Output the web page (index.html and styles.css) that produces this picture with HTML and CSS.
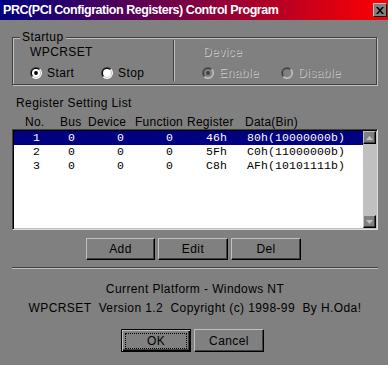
FILE: index.html
```html
<!DOCTYPE html>
<html>
<head>
<meta charset="utf-8">
<title>PRC Control Program</title>
<link rel="stylesheet" href="styles.css">
</head>
<body>
<div class="window">
  <div class="titlebar">
    <span class="title">PRC(PCI Configration Registers) Control Program</span>
    <span class="close"><svg width="8" height="7" viewBox="0 0 8 7"><path d="M0 0h2l2 2.3 2-2.3h2l-3 3.5 3 3.5h-2l-2-2.3-2 2.3h-2l3-3.5z" fill="#000"/></svg></span>
  </div>
  <div class="main">
    <div class="group">
      <div class="legend">Startup</div>
      <div class="cols">
        <div class="col col-left">
          <div class="label">WPCRSET</div>
          <div class="radios">
            <div class="opt opt-start">
              <svg class="radio" width="12" height="12" viewBox="0 0 12 12">
                <path d="M1.757 10.243A6 6 0 0 1 10.243 1.757Z" fill="#404040"/>
                <path d="M10.243 1.757A6 6 0 0 1 1.757 10.243Z" fill="#ffffff"/>
                <path d="M2.464 9.536A5 5 0 0 1 9.536 2.464Z" fill="#000000"/>
                <path d="M9.536 2.464A5 5 0 0 1 2.464 9.536Z" fill="#c0c0c0"/>
                <circle cx="6" cy="6" r="4" fill="#ffffff"/>
                <circle cx="6" cy="6" r="1.9" fill="#000000"/>
              </svg>
              <span>Start</span>
            </div>
            <div class="opt">
              <svg class="radio" width="12" height="12" viewBox="0 0 12 12">
                <path d="M1.757 10.243A6 6 0 0 1 10.243 1.757Z" fill="#404040"/>
                <path d="M10.243 1.757A6 6 0 0 1 1.757 10.243Z" fill="#ffffff"/>
                <path d="M2.464 9.536A5 5 0 0 1 9.536 2.464Z" fill="#000000"/>
                <path d="M9.536 2.464A5 5 0 0 1 2.464 9.536Z" fill="#c0c0c0"/>
                <circle cx="6" cy="6" r="4" fill="#ffffff"/>
              </svg>
              <span>Stop</span>
            </div>
          </div>
        </div>
        <div class="vsep"></div>
        <div class="col col-right disabled">
          <div class="label label-dev">Device</div>
          <div class="radios">
            <div class="opt opt-enable">
              <svg class="radio" width="12" height="12" viewBox="0 0 12 12">
                <path d="M1.757 10.243A6 6 0 0 1 10.243 1.757Z" fill="#5a5a5a"/>
                <path d="M10.243 1.757A6 6 0 0 1 1.757 10.243Z" fill="#c8c8c8"/>
                <path d="M2.464 9.536A5 5 0 0 1 9.536 2.464Z" fill="#3a3a3a"/>
                <path d="M9.536 2.464A5 5 0 0 1 2.464 9.536Z" fill="#a8a8a8"/>
                <circle cx="6" cy="6" r="4" fill="#808080"/>
                <circle cx="6" cy="6" r="1.9" fill="#404040"/>
              </svg>
              <span>Enable</span>
            </div>
            <div class="opt">
              <svg class="radio" width="12" height="12" viewBox="0 0 12 12">
                <path d="M1.757 10.243A6 6 0 0 1 10.243 1.757Z" fill="#5a5a5a"/>
                <path d="M10.243 1.757A6 6 0 0 1 1.757 10.243Z" fill="#c8c8c8"/>
                <path d="M2.464 9.536A5 5 0 0 1 9.536 2.464Z" fill="#3a3a3a"/>
                <path d="M9.536 2.464A5 5 0 0 1 2.464 9.536Z" fill="#a8a8a8"/>
                <circle cx="6" cy="6" r="4" fill="#808080"/>
              </svg>
              <span>Disable</span>
            </div>
          </div>
        </div>
      </div>
    </div>

    <div class="section-label">Register Setting List</div>
    <div class="list-head">
      <span>No.</span><span>Bus</span><span>Device</span><span>Function</span><span>Register</span><span>Data(Bin)</span>
    </div>
    <div class="listbox">
      <div class="rows">
        <div class="row sel"><span>1</span><span>0</span><span>0</span><span>0</span><span>46h</span><span>80h(10000000b)</span></div>
        <div class="row"><span>2</span><span>0</span><span>0</span><span>0</span><span>5Fh</span><span>C0h(11000000b)</span></div>
        <div class="row"><span>3</span><span>0</span><span>0</span><span>0</span><span>C8h</span><span>AFh(10101111b)</span></div>
      </div>
      <div class="vscroll">
        <div class="sbtn"><svg width="7" height="4" viewBox="0 0 7 4"><path d="M3.5 0L7 4H0Z" fill="#c0c0c0"/></svg></div>
        <div class="track"></div>
        <div class="sbtn"><svg width="7" height="4" viewBox="0 0 7 4"><path d="M0 0H7L3.5 4Z" fill="#c0c0c0"/></svg></div>
      </div>
    </div>

    <div class="btnrow">
      <div class="btn btn-add">Add</div>
      <div class="btn">Edit</div>
      <div class="btn">Del</div>
    </div>

    <div class="hsep"></div>

    <div class="info info-first">Current Platform - Windows NT</div>
    <div class="info info-second">WPCRSET  Version 1.2  Copyright (c) 1998-99  By H.Oda!</div>

    <div class="okrow">
      <div class="btn btn-ok"><div class="focus">OK</div></div>
      <div class="btn btn-cancel">Cancel</div>
    </div>
  </div>
</div>
</body>
</html>
```

FILE: styles.css
```css
html, body {
  margin: 0;
  padding: 0;
}
body {
  width: 388px;
  height: 365px;
  overflow: hidden;
  background: #808080;
  font-family: "Liberation Sans", Arial, sans-serif;
  font-size: 12px;
  letter-spacing: 0.4px;
  color: #000;
}

.titlebar {
  height: 20px;
  display: flex;
  align-items: center;
  justify-content: space-between;
  padding: 0 1px 0 3px;
  background: linear-gradient(to right, #000080, #ff0000);
}
.title {
  color: #fff;
  font-weight: bold;
  font-size: 12.5px;
  letter-spacing: -0.45px;
  white-space: nowrap;
}
.close {
  width: 14px;
  height: 14px;
  box-sizing: border-box;
  background: #808080;
  border: 1px solid;
  border-color: #c0c0c0 #000 #000 #c0c0c0;
  display: flex;
  align-items: center;
  justify-content: center;
}
.close svg { display: block; }

.main {
  padding: 0 10px 0 12px;
}

.group {
  margin-top: 17px;
  margin-right: 1px;
  border: 1px solid #404040;
  box-shadow: inset 1px 1px 0 #c0c0c0, 1px 1px 0 #c0c0c0;
  padding: 0 0 4px 0;
}
.legend {
  width: fit-content;
  margin: -8px 0 0 7px;
  padding: 0 2px;
  background: #808080;
  line-height: 14px;
}
.cols {
  display: flex;
  margin-top: 1px;
}
.col-left {
  width: 143px;
  padding-left: 17px;
}
.col-right {
  padding-left: 27px;
}
.vsep {
  width: 0;
  border-left: 1px solid #404040;
  border-right: 1px solid #c0c0c0;
  margin: -5px 0 -1px 0;
}
.label {
  line-height: 14px;
}
.label-dev {
  padding-left: 1px;
}
.radios {
  display: flex;
  align-items: center;
  height: 14px;
  margin-top: 7px;
}
.opt {
  display: flex;
  align-items: center;
  gap: 5px;
}
.opt-start { width: 71px; }
.opt-enable { width: 79px; }
.radio { display: block; }

.disabled .label,
.disabled .opt span {
  color: #7c7c7c;
  text-shadow: 1px 1px 0 #c4c4c4;
}

.section-label {
  margin-top: 11px;
  padding-left: 4px;
  line-height: 14px;
}
.list-head {
  display: grid;
  grid-template-columns: 35px 28px 47px 52px 58px 1fr;
  padding-left: 13px;
  margin-top: 5px;
  line-height: 14px;
  letter-spacing: 0.25px;
  white-space: nowrap;
}

.listbox {
  display: flex;
  height: 101px;
  box-sizing: border-box;
  border: 1px solid;
  border-color: #404040 #dcdcdc #dcdcdc #404040;
  box-shadow: inset 1px 1px 0 #000, inset -1px -1px 0 #c0c0c0;
  padding: 1px;
}
.rows {
  flex: 1;
  background: #fff;
}
.row {
  display: grid;
  grid-template-columns: 35px 49px 49px 40px 41px 1fr;
  padding-left: 19px;
  height: 14px;
  line-height: 14px;
  font-family: "Liberation Mono", "Courier New", monospace;
  font-size: 11.5px;
  letter-spacing: 0.1px;
  white-space: nowrap;
}
.row.sel {
  background: #000080;
  color: #fff;
}
.vscroll {
  width: 13px;
  display: flex;
  flex-direction: column;
  background: #c0c0c0;
}
.sbtn {
  height: 13px;
  box-sizing: border-box;
  background: #808080;
  border: 1px solid;
  border-color: #c0c0c0 #000 #000 #c0c0c0;
  box-shadow: inset -1px -1px 0 #404040;
  display: flex;
  align-items: center;
  justify-content: center;
}
.sbtn svg { display: block; }
.track { flex: 1; }

.btnrow {
  display: flex;
  gap: 3px;
  margin-top: 8px;
  padding-left: 74px;
}
.btn {
  width: 70px;
  height: 22px;
  box-sizing: border-box;
  background: #808080;
  border: 1px solid;
  border-color: #c0c0c0 #000 #000 #c0c0c0;
  box-shadow: inset -1px -1px 0 #404040;
  display: flex;
  align-items: center;
  justify-content: center;
}
.btn-add { width: 69px; }

.hsep {
  margin-top: 7px;
  border-top: 1px solid #404040;
  border-bottom: 1px solid #c0c0c0;
}

.info {
  text-align: center;
  line-height: 14px;
  white-space: pre;
}
.info-first { margin-top: 13px; }
.info-second { margin-top: 5px; }

.okrow {
  display: flex;
  gap: 3px;
  margin-top: 14px;
  padding-left: 109px;
}
.btn-ok,
.btn-cancel {
  height: 23px;
}
.btn-ok {
  border: 1px solid #000;
  box-shadow: inset 1px 1px 0 #c0c0c0, inset -1px -1px 0 #000, inset -2px -2px 0 #404040;
  padding: 3px 3px 2px 3px;
  align-items: stretch;
}
.focus {
  flex: 1;
  border: 1px dotted #000;
  display: flex;
  align-items: center;
  justify-content: center;
}
```
